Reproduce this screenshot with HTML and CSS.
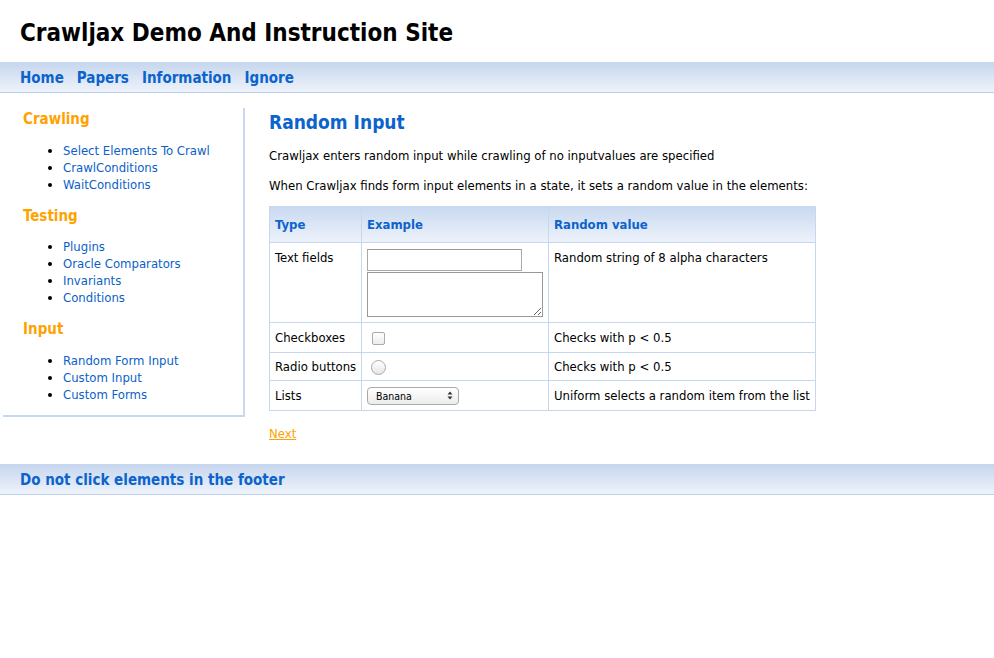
FILE: index.html
```html
<!DOCTYPE html>
<html>
<head>
<meta charset="utf-8">
<title>Crawljax Demo And Instruction Site</title>
<link rel="stylesheet" href="styles.css">
</head>
<body>
<div class="header"><h1 class="site-title">Crawljax Demo And Instruction Site</h1></div>
<div class="navbar">
  <a href="#" class="nav-link">Home</a>
  <a href="#" class="nav-link">Papers</a>
  <a href="#" class="nav-link">Information</a>
  <a href="#" class="nav-link">Ignore</a>
</div>
<div class="content">
  <div class="sidebar">
    <h3 class="side-head">Crawling</h3>
    <ul class="side-list">
      <li><a href="#">Select Elements To Crawl</a></li>
      <li><a href="#">CrawlConditions</a></li>
      <li><a href="#">WaitConditions</a></li>
    </ul>
    <h3 class="side-head">Testing</h3>
    <ul class="side-list short">
      <li><a href="#">Plugins</a></li>
      <li><a href="#">Oracle Comparators</a></li>
      <li><a href="#">Invariants</a></li>
      <li><a href="#">Conditions</a></li>
    </ul>
    <h3 class="side-head">Input</h3>
    <ul class="side-list last">
      <li><a href="#">Random Form Input</a></li>
      <li><a href="#">Custom Input</a></li>
      <li><a href="#">Custom Forms</a></li>
    </ul>
  </div>
  <div class="main">
    <h2 class="page-title">Random Input</h2>
    <p class="text">Crawljax enters random input while crawling of no inputvalues are specified</p>
    <p class="text">When Crawljax finds form input elements in a state, it sets a random value in the elements:</p>
    <table class="info-table">
      <tr class="head-row"><th class="c1">Type</th><th class="c2">Example</th><th class="c3">Random value</th></tr>
      <tr class="r-text"><td>Text fields</td><td><input type="text" class="tf"><textarea class="ta"></textarea></td><td>Random string of 8 alpha characters</td></tr>
      <tr class="r-small r-check"><td>Checkboxes</td><td><span class="cb"></span></td><td>Checks with p &lt; 0.5</td></tr>
      <tr class="r-small r-radio"><td>Radio buttons</td><td><span class="rb"></span></td><td>Checks with p &lt; 0.5</td></tr>
      <tr class="r-small r-list"><td>Lists</td><td><span class="sel"><span class="sel-text">Banana</span><svg class="arrows" width="6" height="9" viewBox="0 0 6 9"><path d="M3 0.5 L5.5 3.5 H0.5 Z M3 8.5 L5.5 5.5 H0.5 Z" fill="#333"/></svg></span></td><td>Uniform selects a random item from the list</td></tr>
    </table>
    <a href="#" class="next">Next</a>
  </div>
</div>
<div class="footer"><span class="footer-text">Do not click elements in the footer</span></div>
</body>
</html>
```
FILE: styles.css
```css
html, body { margin: 0; padding: 0; background: #fff; }
body { font-family: "DejaVu Sans Condensed", "DejaVu Sans", sans-serif; font-size: 13px; color: #000; }
a { color: #0b5fc9; text-decoration: none; }

.header { height: 62px; box-sizing: border-box; padding: 18px 20px 0; }
.site-title { margin: 0; font-size: 24px; line-height: 30px; font-weight: bold; }

.navbar { height: 31px; box-sizing: border-box; border-bottom: 1px solid #bcd0ec; background: linear-gradient(#c6d6ee, #eef3fb); padding: 1px 20px 0; display: flex; gap: 13px; align-items: center; }
.nav-link { font-weight: bold; font-size: 15px; color: #0b63cd; }

.content { display: flex; align-items: flex-start; margin-top: 15px; }
.sidebar { margin-left: 3px; border-right: 2px solid #c8d8f0; border-bottom: 2px solid #c8d8f0; padding: 1px 0 0 20px; box-sizing: border-box; width: 242px; flex: none; }
.side-head { margin: 0; color: #ffa200; font-size: 15px; line-height: 20px; font-weight: bold; }
.side-list { margin: 13px 0 13px 0; padding-left: 40px; line-height: 17px; }
.side-list.short { margin-top: 12px; }
.side-list.last { margin-bottom: 12px; }
.side-list a { color: #0b5fc9; }

.main { margin-left: 24px; flex: 1; }
.page-title { margin: 2px 0 0; font-size: 19px; line-height: 24px; color: #0b63cd; font-weight: bold; }
.text { margin: 13px 0 0; line-height: 17px; white-space: nowrap; }

.info-table { margin-top: 12px; border-collapse: collapse; border: 1px solid #c6d7f0; table-layout: fixed; width: 546px; }
.info-table th, .info-table td { border: 1px solid #c6d7f0; text-align: left; vertical-align: top; padding: 7px 5px 5px; white-space: nowrap; }
.head-row { background: linear-gradient(#c9d9f0, #eef3fb); }
.info-table th { color: #0b63cd; font-size: 13px; height: 36px; box-sizing: border-box; vertical-align: middle; padding-top: 0; padding-bottom: 0; }
.c1 { width: 92px; box-sizing: border-box; }
.c2 { width: 187px; box-sizing: border-box; }
.c3 { width: 267px; box-sizing: border-box; }
.info-table .r-small td { vertical-align: middle; padding-top: 0; padding-bottom: 0; line-height: 17px; }
.r-check { height: 30px; }
.r-radio { height: 28px; }
.r-list { height: 30px; }
.tf { display: block; width: 155px; height: 22px; box-sizing: border-box; border: 1px solid #aaa; border-top-color: #999; margin: -1px 0 1px; padding: 0; }
.ta { display: block; width: 176px; height: 45px; box-sizing: border-box; border: 1px solid #999; margin: 0; padding: 0; resize: both; }
.cb { display: inline-block; width: 11px; height: 11px; border: 1px solid #aaa; border-radius: 2px; background: linear-gradient(#fff, #ececec); margin: 0 0 0 5px; vertical-align: middle; }
.rb { display: inline-block; width: 13px; height: 13px; border: 1px solid #aaa; border-radius: 50%; background: linear-gradient(#fff, #e6e6e6); margin: 0 0 0 4px; vertical-align: middle; }
.sel { display: inline-flex; align-items: center; justify-content: space-between; width: 92px; height: 18px; box-sizing: border-box; border: 1px solid #aaa; border-radius: 4px; background: linear-gradient(#fff, #ececec); padding: 0 5px 0 8px; font-size: 10.5px; vertical-align: middle; }
.sel-text { line-height: 16px; }
.arrows { display: block; }

.next { display: inline-block; margin-top: 15px; color: #ffa200; text-decoration: underline; }

.footer { margin-top: 23px; height: 31px; box-sizing: border-box; border-bottom: 1px solid #bcd0ec; background: linear-gradient(#c6d6ee, #eef3fb); padding: 1px 20px 0; display: flex; align-items: center; }
.footer-text { font-weight: bold; font-size: 15px; color: #0b63cd; }
```
